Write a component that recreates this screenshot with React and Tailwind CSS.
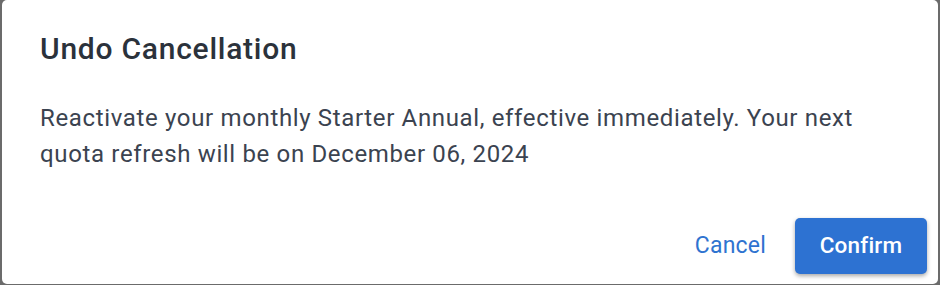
import React from "react";

const App = () => {
  return (
    <div className="bg-[#6b6b6b] w-[940px] h-[285px] overflow-hidden font-['Roboto',sans-serif]">
      <div className="bg-white ml-[2px] w-[936px] h-[284px] rounded-[5px] flex flex-col">
        <h2 className="text-[30px] font-medium text-[#2b323b] pl-[38px] pt-[31px] leading-[36px] tracking-[0.75px]">
          Undo Cancellation
        </h2>
        <p className="text-[24px] text-[#3b4350] pl-[38px] pr-[40px] mt-[33px] leading-[36px] tracking-[0.65px]">
          Reactivate your monthly Starter Annual, effective immediately. Your next quota refresh will be on December 06, 2024
        </p>
        <div className="flex justify-end items-center gap-[27px] mt-auto mb-[10px] pr-[11px]">
          <button className="text-[23px] text-[#2f73d0] px-[2px] tracking-[0.2px]">Cancel</button>
          <button className="bg-[#2d72d2] text-white text-[22.5px] font-medium rounded-[5px] w-[132px] h-[56px] shadow-[0_2px_4px_rgba(0,0,0,0.35)] tracking-[0.2px]">
            Confirm
          </button>
        </div>
      </div>
    </div>
  );
};

export default App;
